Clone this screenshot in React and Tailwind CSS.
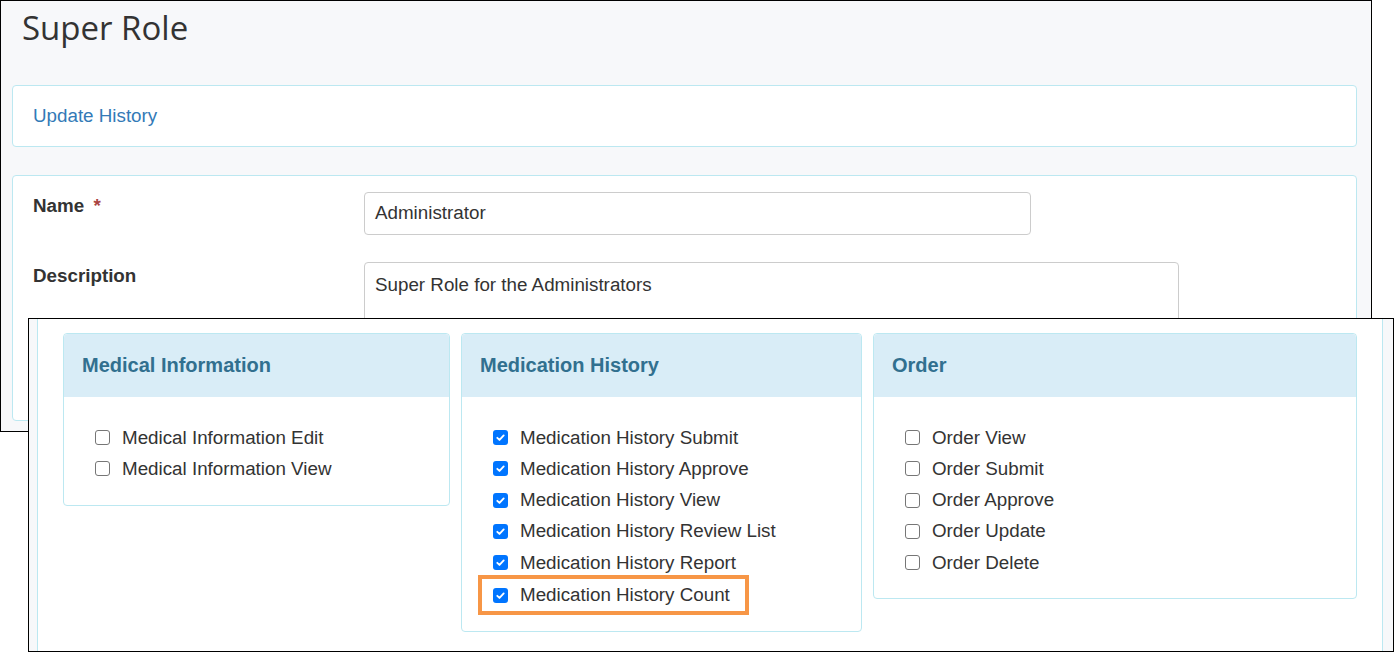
import React from "react";

const F = { fontFamily: '"Liberation Sans", Arial, sans-serif' };

function Box({ checked }) {
  return checked ? (
    <span className="inline-flex w-[15px] h-[15px] rounded-[3px] bg-[#0075ff] items-center justify-center shrink-0">
      <svg width="11" height="11" viewBox="0 0 12 12"><path d="M2.5 6.3l2.4 2.4 4.6-5" stroke="white" strokeWidth="2" fill="none" strokeLinecap="round" strokeLinejoin="round" /></svg>
    </span>
  ) : (
    <span className="inline-block w-[15px] h-[15px] rounded-[3px] border border-[#767676] bg-white shrink-0" />
  );
}

function Card({ title, items, checked, className, highlightLast }) {
  return (
    <div className={"border border-[#bce8f1] rounded-[4px] bg-white " + className}>
      <div className="h-[63px] bg-[#d9edf7] flex items-center px-[18px] pb-[2px] text-[20px] font-bold text-[#31708f] rounded-t-[4px]">{title}</div>
      <div className="pt-[25px] pb-[20px] pl-[31px] flex flex-col">
        {items.map((t, i) => {
          const hl = highlightLast && i === items.length - 1;
          return (
            <div key={t} className={"flex items-center gap-[12px] h-[31.3px] text-[18.8px] text-[#333] " + (hl ? "outline-[4px] outline outline-[#f79646] -ml-[11px] pl-[11px] w-[263px] mt-[1px]" : "")}>
              <Box checked={checked} />
              <span>{t}</span>
            </div>
          );
        })}
      </div>
    </div>
  );
}

export default function App() {
  return (
    <div className="relative w-[1394px] h-[652px] bg-white overflow-hidden" style={F}>
      <div className="absolute left-0 top-0 w-[1372px] h-[432px] border border-black bg-[#f7f8fa] pl-[11px] pr-[14px]">
        <h1 className="text-[33px] text-[#333] pl-[10px] pt-[2px] h-[84px]" style={{ fontFamily: '"Open Sans", sans-serif' }}>Super Role</h1>
        <div className="h-[62px] border border-[#bce8f1] rounded-[4px] bg-white flex items-center px-[20px] text-[18.8px] text-[#337ab7]">Update History</div>
        <div className="mt-[28px] h-[246px] border border-[#bce8f1] rounded-[4px] bg-white px-[20px] pt-[16px]">
          <div className="flex">
            <div className="w-[331px] font-bold text-[18.8px] text-[#333]">Name <span className="text-[#a94442] ml-[4px]">*</span></div>
            <div className="w-[667px] h-[43px] border border-[#ccc] rounded-[4px] flex items-center px-[10px] text-[18.8px] text-[#333]">Administrator</div>
          </div>
          <div className="flex mt-[27px]">
            <div className="w-[331px] font-bold text-[18.8px] text-[#333]">Description</div>
            <div className="w-[815px] h-[80px] border border-[#ccc] rounded-[4px] px-[10px] pt-[8px] text-[18.8px] text-[#333]">Super Role for the Administrators</div>
          </div>
        </div>
      </div>
      <div className="absolute left-[28px] top-[318px] w-[1366px] h-[334px] border border-black bg-white flex">
        <div className="w-[9px] bg-[#f7f8fa] border-r border-[#bce8f1]" />
        <div className="flex-1 flex items-start gap-[11px] pl-[25px] pt-[14px]">
          <Card title="Medical Information" className="w-[387px]" items={["Medical Information Edit", "Medical Information View"]} />
          <Card title="Medication History" className="w-[401px]" checked highlightLast items={["Medication History Submit", "Medication History Approve", "Medication History View", "Medication History Review List", "Medication History Report", "Medication History Count"]} />
          <Card title="Order" className="w-[484px]" items={["Order View", "Order Submit", "Order Approve", "Order Update", "Order Delete"]} />
        </div>
        <div className="w-[11px] bg-[#f7f8fa] border-l border-[#bce8f1]" />
      </div>
    </div>
  );
}
